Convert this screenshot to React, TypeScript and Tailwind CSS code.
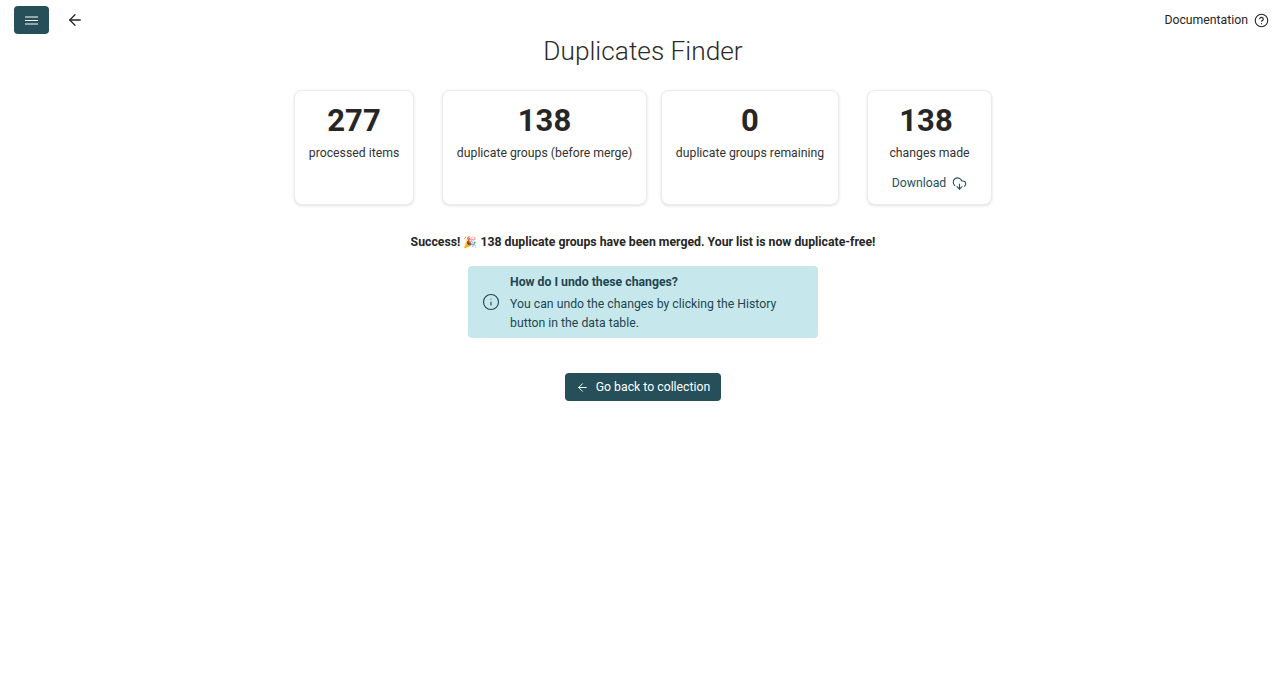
import { ArrowLeft, CircleHelp, CloudDownload, Info } from "lucide-react";

const stats = [
  { value: "277", label: "processed items", width: "w-[120px]", margin: "mr-[14px]" },
  { value: "138", label: "duplicate groups (before merge)", width: "w-[205px]", margin: "" },
  { value: "0", label: "duplicate groups remaining", width: "w-[178px]", margin: "" },
  { value: "138", label: "changes made", width: "w-[125px]", margin: "ml-[14px]", download: true },
];

function StatCard({ value, label, width, margin, download }: { value: string; label: string; width: string; margin: string; download?: boolean }) {
  return (
    <div className={`${width} ${margin} h-[115px] rounded-lg border border-[#ececec] bg-white shadow-[0_1px_3px_rgba(0,0,0,0.12)] flex flex-col items-center pt-[11px]`}>
      <div className={`text-[31px] leading-[38px] font-bold text-[#262626] ${download ? "pr-[7px]" : ""}`}>{value}</div>
      <div className="mt-[3px] text-[12.25px] leading-[20px] text-[#333333] whitespace-nowrap">{label}</div>
      {download && (
        <div className="mt-[10px] flex items-center gap-[6px] text-[12.25px] leading-[20px] text-[#264f5a]">
          Download
          <CloudDownload size={15} strokeWidth={1.75} />
        </div>
      )}
    </div>
  );
}

export default function App() {
  return (
    <div className="min-h-[700px] bg-white font-['Roboto',sans-serif] text-[#262626]">
      {/* Top bar */}
      <div className="flex items-start justify-between pl-[14px] pr-[17px] pt-[6px]">
        <div className="flex items-center gap-[17px]">
          <button className="w-[35px] h-[28px] rounded bg-[#264f5a] text-white flex items-center justify-center">
            <svg width="13" height="9" viewBox="0 0 13 9" fill="none" stroke="currentColor" strokeWidth="1.2">
              <path d="M0 1H13M0 4.5H13M0 8H13" />
            </svg>
          </button>
          <ArrowLeft size={18} strokeWidth={1.75} className="text-[#262626]" />
        </div>
        <div className="flex items-center gap-[6px] h-[28px] text-[12.25px] text-[#262626]">
          Documentation
          <CircleHelp size={15} strokeWidth={1.75} />
        </div>
      </div>

      <h1 className="mt-[-1px] text-center text-[26.25px] leading-[36px] font-light text-[#2b2b2b]">Duplicates Finder</h1>

      {/* Stats */}
      <div className="mt-[21px] flex justify-center gap-[14px]">
        {stats.map((s, i) => (
          <StatCard key={i} {...s} />
        ))}
      </div>

      <p className="mt-[28px] text-center text-[12.25px] leading-[18px] font-bold text-[#262626]">
        Success! <span className="text-[11px]">🎉</span> 138 duplicate groups have been merged. Your list is now duplicate-free!
      </p>

      {/* Info box */}
      <div className="mt-[14px] flex justify-center">
        <div className="w-[350px] h-[72px] rounded bg-[#c6e8ed] text-[#1f4650] flex items-center pl-[14px]">
          <Info size={18} strokeWidth={1.5} className="shrink-0" />
          <div className="ml-[10px] w-[285px] pt-[1px] text-[12.25px] leading-[19px]">
            <div className="font-bold">How do I undo these changes?</div>
            <div className="mt-[3px]">You can undo the changes by clicking the History button in the data table.</div>
          </div>
        </div>
      </div>

      <div className="mt-[35px] flex justify-center">
        <button className="w-[156px] h-[28px] rounded bg-[#264f5a] text-white text-[12.25px] flex items-center justify-center gap-[7px]">
          <ArrowLeft size={13} strokeWidth={1.75} />
          Go back to collection
        </button>
      </div>
    </div>
  );
}
